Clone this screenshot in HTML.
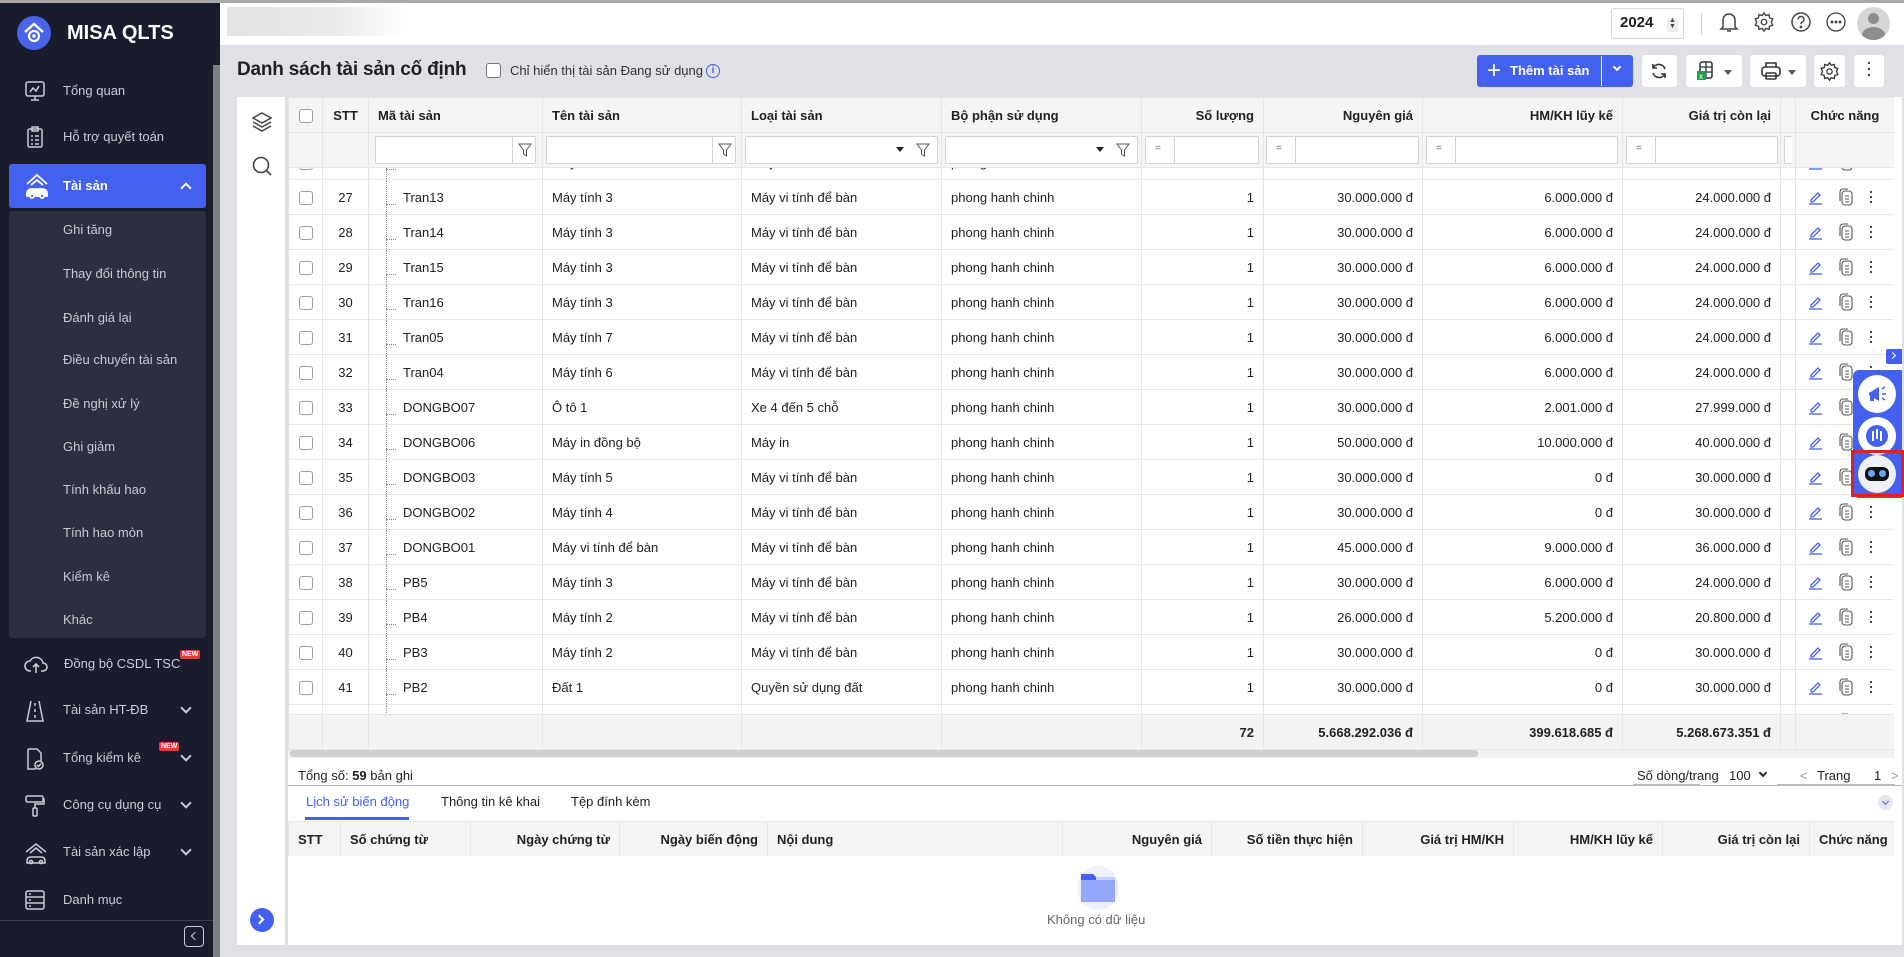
<!DOCTYPE html>
<html><head><meta charset="utf-8">
<style>
*{box-sizing:border-box;margin:0;padding:0}
body{width:1904px;height:957px;overflow:hidden;font-family:"Liberation Sans",Arial,sans-serif;font-size:13px;color:#212121;background:#dfe1e6;position:relative}
.abs{position:absolute}
#topborder{left:0;top:0;width:1904px;height:3px;background:#a9a9a9;z-index:9}
#side{left:0;top:0;width:220px;height:957px;background:#181c2d}
#side .sb{left:213px;top:65px;width:7px;height:892px;background:#7d7e83}
.mi{position:absolute;left:0;width:210px;height:40px;color:#c9ccd4;font-size:13px}
.mi span{position:absolute;left:63px;top:12px}
.mi svg{position:absolute;left:24px;top:9px}
.mi .chev{position:absolute;left:182px;top:14px;width:8px;height:8px;border-right:2px solid #c9ccd4;border-bottom:2px solid #c9ccd4;transform:rotate(45deg)}
.sub{position:absolute;left:63px;color:#c7cad2;font-size:13px}
.new{position:absolute;background:#e63b3b;color:#fff;font-size:7px;font-weight:bold;padding:1px 2px;border-radius:2px}
#hdr{left:220px;top:3px;width:1684px;height:42px;background:#fff}
.ibtn{position:absolute;background:#fff;border-radius:3px;height:32px;top:55px}
table{border-collapse:collapse;table-layout:fixed}
td,th{border:1px solid #e6e6e6;height:35px;padding:0 9px;white-space:nowrap;overflow:hidden}
th{font-weight:bold;text-align:left}
.r{text-align:right}.c{text-align:center}
.cb{display:inline-block;width:14px;height:14px;border:1px solid #9e9e9e;border-radius:3px;vertical-align:middle;background:#fff}
.tree{position:relative;padding-left:34px}
.tree:before{content:"";position:absolute;left:17px;top:0;height:100%;border-left:1px dotted #888}
.tree:after{content:"";position:absolute;left:17px;top:24px;width:10px;border-top:1px dotted #888}
.fi{position:absolute;top:136px;height:28px;background:#fff;border:1px solid #cfd2d6;border-radius:2px}
.act svg{vertical-align:middle}
</style></head><body>
<div id="topborder" class="abs"></div>
<div id="side" class="abs">
  <div class="abs sb"></div>
  <div class="abs" style="left:17px;top:16px;width:34px;height:34px;border-radius:50%;background:#4a63e8"></div>
  <svg class="abs" style="left:23px;top:21px" width="22" height="24" viewBox="0 0 22 24"><path d="M2 11 L11 3 L20 11" fill="none" stroke="#fff" stroke-width="2.4"/><circle cx="11" cy="15" r="5" fill="none" stroke="#fff" stroke-width="2.2"/><circle cx="11" cy="15" r="1.8" fill="#fff"/></svg>
  <div class="abs" style="left:67px;top:22px;color:#fff;font-weight:bold;font-size:20px">MISA QLTS</div>

  <div class="mi" style="top:71px"><svg width="22" height="22" viewBox="0 0 22 22" fill="none" stroke="#c9ccd4" stroke-width="1.5"><rect x="2" y="2" width="18" height="14" rx="2"/><path d="M11 16v4M7 20h8M6 12l3-4 3 3 3-5"/></svg><span>Tổng quan</span></div>
  <div class="mi" style="top:117px"><svg width="22" height="22" viewBox="0 0 22 22" fill="none" stroke="#c9ccd4" stroke-width="1.5"><rect x="4" y="3" width="14" height="18" rx="1.5"/><rect x="8" y="1" width="6" height="4"/><path d="M7 10h2M11 10h4M7 14h2M11 14h4M7 18h2M11 18h4"/></svg><span>Hỗ trợ quyết toán</span></div>
  <div class="abs" style="left:9px;top:164px;width:197px;height:44px;background:#4361ee;border-radius:3px"></div>
  <svg class="abs" style="left:24px;top:172px" width="26" height="28" viewBox="0 0 26 28" fill="none" stroke="#fff" stroke-width="1.8"><path d="M3 12 L13 3 L23 12"/><path d="M7 13 L13 8 L19 13"/><path d="M3 22 q0-5 5-5 h10 q5 0 5 5 v2 H3z" fill="#fff"/><circle cx="8" cy="24" r="2" fill="#4361ee"/><circle cx="18" cy="24" r="2" fill="#4361ee"/></svg>
  <div class="abs" style="left:63px;top:178px;color:#fff;font-weight:bold;font-size:13px">Tài sản</div>
  <div class="abs" style="left:182px;top:184px;width:8px;height:8px;border-left:2px solid #fff;border-top:2px solid #fff;transform:rotate(45deg)"></div>
  <div class="abs" style="left:9px;top:211px;width:197px;height:427px;background:#2c2f40;border-radius:3px"></div>
  <div class="sub" style="top:222px">Ghi tăng</div>
  <div class="sub" style="top:266px">Thay đổi thông tin</div>
  <div class="sub" style="top:310px">Đánh giá lại</div>
  <div class="sub" style="top:352px">Điều chuyển tài sản</div>
  <div class="sub" style="top:396px">Đề nghị xử lý</div>
  <div class="sub" style="top:439px">Ghi giảm</div>
  <div class="sub" style="top:482px">Tính khấu hao</div>
  <div class="sub" style="top:525px">Tính hao mòn</div>
  <div class="sub" style="top:569px">Kiểm kê</div>
  <div class="sub" style="top:612px">Khác</div>

  <div class="mi" style="top:644px"><svg width="24" height="22" viewBox="0 0 24 22" fill="none" stroke="#c9ccd4" stroke-width="1.6"><path d="M7 18 H6 a5 5 0 0 1 0-10 a7 7 0 0 1 13 2 a4 4 0 0 1 0 8 h-2"/><path d="M12 20 V11 M9 14 l3-3 3 3"/></svg><span style="left:64px">Đồng bộ CSDL TSC</span><div class="new" style="left:180px;top:6px">NEW</div></div>
  <div class="mi" style="top:690px"><svg width="22" height="24" viewBox="0 0 22 24" fill="none" stroke="#c9ccd4" stroke-width="1.5"><path d="M7 2 L3 22 H19 L15 2 M11 4v3M11 10v3M11 16v3"/></svg><span>Tài sản HT-ĐB</span><div class="chev"></div></div>
  <div class="mi" style="top:738px"><svg width="22" height="24" viewBox="0 0 22 24" fill="none" stroke="#c9ccd4" stroke-width="1.5"><path d="M4 2h9l4 4v8M4 2v20h8"/><circle cx="15" cy="18" r="4"/><path d="M13 18l1.5 1.5 2.5-3"/></svg><span>Tổng kiểm kê</span><div class="new" style="left:159px;top:4px">NEW</div><div class="chev"></div></div>
  <div class="mi" style="top:785px"><svg width="22" height="24" viewBox="0 0 22 24" fill="none" stroke="#c9ccd4" stroke-width="1.5"><rect x="2" y="2" width="17" height="6" rx="1.5"/><path d="M19 5h1v5h-9v4"/><rect x="9" y="14" width="4" height="8" rx="1"/></svg><span>Công cụ dụng cụ</span><div class="chev"></div></div>
  <div class="mi" style="top:832px"><svg width="24" height="24" viewBox="0 0 24 24" fill="none" stroke="#c9ccd4" stroke-width="1.5"><path d="M2 11 L12 3 L22 11M6 12l6-5 6 5"/><path d="M3 20q0-4 4-4h10q4 0 4 4v2H3z"/><circle cx="7" cy="21" r="1.6"/><circle cx="17" cy="21" r="1.6"/></svg><span>Tài sản xác lập</span><div class="chev"></div></div>
  <div class="mi" style="top:880px"><svg width="22" height="22" viewBox="0 0 22 22" fill="none" stroke="#c9ccd4" stroke-width="1.5"><rect x="2" y="2" width="18" height="18" rx="2"/><path d="M2 8h18M2 14h18M5 5h2M5 11h2M5 17h2"/></svg><span>Danh mục</span></div>
  <div class="abs" style="left:0;top:920px;width:213px;height:1px;background:#3a3d4e"></div>
  <div class="abs" style="left:184px;top:926px;width:20px;height:21px;border:1.5px solid #c9ccd4;border-radius:4px"></div>
  <div class="abs" style="left:192px;top:933px;width:6px;height:6px;border-left:1.5px solid #c9ccd4;border-bottom:1.5px solid #c9ccd4;transform:rotate(45deg)"></div>
</div>

<div id="hdr" class="abs"></div>
<div class="abs" style="left:227px;top:7px;width:180px;height:29px;background:linear-gradient(90deg,#e3e3e3,#ebebeb 60%,#fff)"></div>
<div class="abs" style="left:1611px;top:8px;width:73px;height:31px;border:1px solid #d5d5d5;border-radius:3px;background:#fff"></div>
<div class="abs" style="left:1620px;top:14px;font-weight:bold;font-size:15px">2024</div>
<div class="abs" style="left:1667px;top:18px;width:11px;height:14px;background:#eee;font-size:7px;line-height:6px;text-align:center;color:#444">▲<br>▼</div>
<div class="abs" style="left:1701px;top:13px;width:1px;height:22px;background:#ccc"></div>
<svg class="abs" style="left:1718px;top:10px" width="22" height="24" viewBox="0 0 22 24" fill="none" stroke="#444" stroke-width="1.5"><path d="M5 17V10a6 6 0 0 1 12 0v7l2 2H3z"/><path d="M9 21h4"/></svg>
<svg class="abs" style="left:1753px;top:11px" width="22" height="22" viewBox="0 0 24 24" fill="none" stroke="#444" stroke-width="1.5"><circle cx="12" cy="12" r="3"/><path d="M12 2l2 3 3.5-1 .5 3.5 3.5 1-1.5 3.5 1.5 3.5-3.5 1-.5 3.5-3.5-1-2 3-2-3-3.5 1-.5-3.5-3.5-1 1.5-3.5L2.5 8.5l3.5-1 .5-3.5L10 5z"/></svg>
<svg class="abs" style="left:1790px;top:11px" width="22" height="22" viewBox="0 0 22 22" fill="none" stroke="#444" stroke-width="1.5"><circle cx="11" cy="11" r="9"/><path d="M8 8.5a3 3 0 1 1 4 2.8c-1 .4-1 1-1 2"/><circle cx="11" cy="16" r=".6" fill="#444"/></svg>
<svg class="abs" style="left:1825px;top:11px" width="22" height="22" viewBox="0 0 22 22" fill="none" stroke="#444" stroke-width="1.3"><circle cx="11" cy="11" r="9"/><circle cx="7" cy="11" r=".8" fill="#444"/><circle cx="11" cy="11" r=".8" fill="#444"/><circle cx="15" cy="11" r=".8" fill="#444"/></svg>
<div class="abs" style="left:1857px;top:7px;width:33px;height:33px;border-radius:50%;background:#d6d6d6;overflow:hidden"><div class="abs" style="left:11px;top:6px;width:11px;height:11px;border-radius:50%;background:#8d8d8d"></div><div class="abs" style="left:5px;top:20px;width:23px;height:16px;border-radius:50%;background:#8d8d8d"></div></div>

<div class="abs" style="left:237px;top:59px;font-size:19px;font-weight:bold;letter-spacing:-0.2px">Danh sách tài sản cố định</div>
<div class="abs" style="left:486px;top:63px;width:15px;height:15px;border:1px solid #777;border-radius:3px;background:#fff"></div>
<div class="abs" style="left:510px;top:63px;font-size:13px;color:#333">Chỉ hiển thị tài sản Đang sử dụng</div>
<div class="abs" style="left:706px;top:64px;width:14px;height:14px;border:1.3px solid #4361ee;border-radius:50%;color:#4361ee;font-size:10px;text-align:center;line-height:12px;font-weight:bold">i</div>

<div class="ibtn" style="left:1477px;width:156px;background:#4361ee"></div>
<div class="abs" style="left:1487px;top:60px;color:#fff;font-size:24px;line-height:22px">+</div>
<div class="abs" style="left:1510px;top:63px;color:#fff;font-weight:bold;font-size:13px">Thêm tài sản</div>
<div class="abs" style="left:1601px;top:56px;width:1px;height:30px;background:#fff"></div>
<div class="abs" style="left:1614px;top:64px;width:6px;height:6px;border-right:2px solid #fff;border-bottom:2px solid #fff;transform:rotate(45deg)"></div>
<div class="ibtn" style="left:1642px;width:35px"></div>
<svg class="abs" style="left:1649px;top:61px" width="20" height="20" viewBox="0 0 20 20" fill="none" stroke="#333" stroke-width="1.6"><path d="M16 8a6.5 6.5 0 0 0-12-1M4 12a6.5 6.5 0 0 0 12 1"/><path d="M4 3v4h4M16 17v-4h-4"/></svg>
<div class="ibtn" style="left:1686px;width:56px"></div>
<svg class="abs" style="left:1697px;top:60px" width="18" height="22" viewBox="0 0 18 22"><rect x="3" y="2" width="12" height="16" rx="2" fill="none" stroke="#333" stroke-width="1.5"/><path d="M3 7h12M3 12h12M9 2v16" stroke="#333" stroke-width="1.3"/><rect x="0" y="11" width="9" height="9" fill="#1fa34a"/><text x="2" y="19" font-size="8" fill="#fff" font-family="Liberation Sans">x</text></svg>
<div class="abs" style="left:1724px;top:70px;border:4px solid transparent;border-top:5px solid #555"></div>
<div class="ibtn" style="left:1750px;width:56px"></div>
<svg class="abs" style="left:1760px;top:61px" width="22" height="20" viewBox="0 0 22 20" fill="none" stroke="#333" stroke-width="1.6"><path d="M6 6V2h10v4"/><rect x="2" y="6" width="18" height="9" rx="3"/><rect x="6" y="12" width="10" height="6" rx="1"/></svg>
<div class="abs" style="left:1788px;top:70px;border:4px solid transparent;border-top:5px solid #555"></div>
<div class="ibtn" style="left:1814px;width:31px"></div>
<svg class="abs" style="left:1819px;top:61px" width="21" height="21" viewBox="0 0 24 24" fill="none" stroke="#333" stroke-width="1.5"><circle cx="12" cy="12" r="3"/><path d="M12 2l2 3 3.5-1 .5 3.5 3.5 1-1.5 3.5 1.5 3.5-3.5 1-.5 3.5-3.5-1-2 3-2-3-3.5 1-.5-3.5-3.5-1 1.5-3.5L2.5 8.5l3.5-1 .5-3.5L10 5z"/></svg>
<div class="ibtn" style="left:1854px;width:30px"></div>
<div class="abs" style="left:1868px;top:62px;width:2px;height:2px;background:#444;box-shadow:0 6px #444,0 12px #444"></div>

<div class="abs" style="left:237px;top:97px;width:49px;height:848px;background:#fff;border-right:1px solid #ddd"></div>
<svg class="abs" style="left:251px;top:111px" width="22" height="22" viewBox="0 0 22 22" fill="none" stroke="#444" stroke-width="1.5"><path d="M11 2L2 7l9 5 9-5z"/><path d="M2 11l9 5 9-5M2 15l9 5 9-5"/></svg>
<svg class="abs" style="left:251px;top:155px" width="22" height="22" viewBox="0 0 22 22" fill="none" stroke="#444" stroke-width="1.6"><circle cx="10" cy="10" r="7.5"/><path d="M15.5 15.5L20 20"/></svg>
<div class="abs" style="left:250px;top:908px;width:24px;height:24px;border-radius:50%;background:#4361ee"></div>
<div class="abs" style="left:256px;top:916px;width:7px;height:7px;border-right:2px solid #fff;border-top:2px solid #fff;transform:rotate(45deg)"></div>

<div class="abs" style="left:287px;top:97px;width:1615px;height:848px;background:#fff;border-left:1px solid #ddd"></div>

<div class="abs" style="left:288px;top:97px;width:1606px;height:71px;background:#f5f5f5;overflow:hidden;z-index:3">
<table style="width:1606px;background:#fff">
<colgroup><col style="width:34px"><col style="width:46px"><col style="width:174px"><col style="width:199px"><col style="width:200px"><col style="width:200px"><col style="width:122px"><col style="width:159px"><col style="width:200px"><col style="width:158px"><col style="width:15px"><col style="width:99px"></colgroup>
<tr style="background:#f5f5f5"><th class="c" style="padding:0"><span class="cb"></span></th><th class="c" style="padding:0">STT</th><th>Mã tài sản</th><th>Tên tài sản</th><th>Loại tài sản</th><th>Bộ phận sử dụng</th><th class="r">Số lượng</th><th class="r">Nguyên giá</th><th class="r">HM/KH lũy kế</th><th class="r">Giá trị còn lại</th><th></th><th class="c">Chức năng</th></tr>
<tr style="background:#f5f5f5"><td></td><td></td><td></td><td></td><td></td><td></td><td></td><td></td><td></td><td></td><td></td><td></td></tr>
</table>
</div>
<div style="z-index:4;position:absolute;left:0;top:0">
<div class="fi" style="left:375px;width:161px"><div class="abs" style="left:136px;top:0;width:1px;height:26px;background:#cfd2d6"></div><svg class="abs" style="left:142px;top:6px" width="14" height="14" viewBox="0 0 14 14" fill="none" stroke="#555"><path d="M1 1h12L8.5 7v6l-3-2V7z"/></svg></div>
<div class="fi" style="left:546px;width:190px"><div class="abs" style="left:165px;top:0;width:1px;height:26px;background:#cfd2d6"></div><svg class="abs" style="left:171px;top:6px" width="14" height="14" viewBox="0 0 14 14" fill="none" stroke="#555"><path d="M1 1h12L8.5 7v6l-3-2V7z"/></svg></div>
<div class="fi" style="left:745px;width:193px"><div class="abs" style="left:150px;top:10px;border:4px solid transparent;border-top:5px solid #222"></div><svg class="abs" style="left:170px;top:6px" width="14" height="14" viewBox="0 0 14 14" fill="none" stroke="#555"><path d="M1 1h12L8.5 7v6l-3-2V7z"/></svg></div>
<div class="fi" style="left:945px;width:193px"><div class="abs" style="left:150px;top:10px;border:4px solid transparent;border-top:5px solid #222"></div><svg class="abs" style="left:170px;top:6px" width="14" height="14" viewBox="0 0 14 14" fill="none" stroke="#555"><path d="M1 1h12L8.5 7v6l-3-2V7z"/></svg></div>
<div class="fi" style="left:1145px;width:114px"><span class="abs" style="left:9px;top:6px;font-size:10px;color:#777">=</span><div class="abs" style="left:28px;top:0;width:1px;height:26px;background:#cfd2d6"></div></div>
<div class="fi" style="left:1266px;width:153px"><span class="abs" style="left:9px;top:6px;font-size:10px;color:#777">=</span><div class="abs" style="left:28px;top:0;width:1px;height:26px;background:#cfd2d6"></div></div>
<div class="fi" style="left:1426px;width:192px"><span class="abs" style="left:9px;top:6px;font-size:10px;color:#777">=</span><div class="abs" style="left:28px;top:0;width:1px;height:26px;background:#cfd2d6"></div></div>
<div class="fi" style="left:1626px;width:152px"><span class="abs" style="left:9px;top:6px;font-size:10px;color:#777">=</span><div class="abs" style="left:28px;top:0;width:1px;height:26px;background:#cfd2d6"></div></div>
<div class="fi" style="left:1784px;width:8px;border-right:none"></div>
</div>

<div class="abs" style="left:288px;top:168px;width:1606px;height:546px;overflow:hidden">
<table style="width:1606px;margin-top:-24px">
<colgroup><col style="width:34px"><col style="width:46px"><col style="width:174px"><col style="width:199px"><col style="width:200px"><col style="width:200px"><col style="width:122px"><col style="width:159px"><col style="width:200px"><col style="width:158px"><col style="width:15px"><col style="width:99px"></colgroup>
<tbody id="tb"></tbody>
</table>
</div>

<div class="abs" style="left:288px;top:714px;width:1606px;height:36px;background:#f3f3f3;overflow:hidden">
<table style="width:1606px;font-weight:bold">
<colgroup><col style="width:34px"><col style="width:46px"><col style="width:174px"><col style="width:199px"><col style="width:200px"><col style="width:200px"><col style="width:122px"><col style="width:159px"><col style="width:200px"><col style="width:158px"><col style="width:15px"><col style="width:99px"></colgroup>
<tr><td></td><td></td><td></td><td></td><td></td><td></td><td class="r">72</td><td class="r">5.668.292.036 đ</td><td class="r">399.618.685 đ</td><td class="r">5.268.673.351 đ</td><td></td><td></td></tr>
</table></div>
<div class="abs" style="left:288px;top:750px;width:1606px;height:8px;background:#f1f1f1"></div>
<div class="abs" style="left:290px;top:750px;width:1188px;height:7px;background:#cfcfcf;border-radius:4px"></div>

<div class="abs" style="left:298px;top:768px;font-size:13px">Tổng số: <b>59</b> bản ghi</div>
<div class="abs" style="left:1637px;top:768px;font-size:13px">Số dòng/trang</div>
<div class="abs" style="left:1633px;top:784px;width:67px;height:1px;background:#bbb"></div>
<div class="abs" style="left:1729px;top:768px;font-size:13px">100</div>
<div class="abs" style="left:1760px;top:770px;width:6px;height:6px;border-right:2px solid #222;border-bottom:2px solid #222;transform:rotate(45deg)"></div>
<div class="abs" style="left:1777px;top:784px;width:118px;height:1px;background:#bbb"></div>
<div class="abs" style="left:1800px;top:768px;color:#999">&lt;</div>
<div class="abs" style="left:1817px;top:768px">Trang</div>
<div class="abs" style="left:1874px;top:768px">1</div>
<div class="abs" style="left:1891px;top:768px;color:#999">&gt;</div>
<div class="abs" style="left:288px;top:785px;width:1614px;height:1px;background:#bbb"></div>

<div class="abs" style="left:306px;top:794px;color:#4361ee;font-size:13px">Lịch sử biến động</div>
<div class="abs" style="left:305px;top:817px;width:104px;height:3px;background:#4361ee"></div>
<div class="abs" style="left:441px;top:794px;font-size:13px">Thông tin kê khai</div>
<div class="abs" style="left:571px;top:794px;font-size:13px">Tệp đính kèm</div>
<div class="abs" style="left:1878px;top:795px;width:15px;height:15px;border-radius:50%;background:#e6e7ee"></div>
<div class="abs" style="left:1883px;top:799px;width:5px;height:5px;border-right:1.5px solid #4361ee;border-bottom:1.5px solid #4361ee;transform:rotate(45deg)"></div>

<div class="abs" style="left:288px;top:821px;width:1606px;height:35px;background:#f5f5f5;overflow:hidden">
<table style="width:1606px;font-weight:bold">
<colgroup><col style="width:52px"><col style="width:130px"><col style="width:149px"><col style="width:148px"><col style="width:295px"><col style="width:149px"><col style="width:151px"><col style="width:151px"><col style="width:149px"><col style="width:147px"><col style="width:85px"></colgroup>
<tr style="background:#f5f5f5"><td>STT</td><td>Số chứng từ</td><td class="r">Ngày chứng từ</td><td class="r">Ngày biến động</td><td>Nội dung</td><td class="r">Nguyên giá</td><td class="r">Số tiền thực hiện</td><td class="r">Giá trị HM/KH</td><td class="r">HM/KH lũy kế</td><td class="r">Giá trị còn lại</td><td>Chức năng</td></tr>
</table></div>
<div class="abs" style="left:1077px;top:866px;width:42px;height:44px;border-radius:50%;background:#eef0fb"></div>
<svg class="abs" style="left:1078px;top:866px" width="40" height="42" viewBox="0 0 40 42"><path d="M3 8h12l3 3h19v6H3z" fill="#4361ee"/><path d="M3 14h34v22H3z" fill="#93a6f7"/><path d="M18 11h19v3H18z" fill="#c6d0fb"/></svg>
<div class="abs" style="left:1047px;top:912px;color:#666;font-size:13px">Không có dữ liệu</div>

<div class="abs" style="left:1886px;top:349px;width:16px;height:15px;background:#4361ee;border-radius:2px 0 0 2px"></div>
<div class="abs" style="left:1890px;top:353px;width:5px;height:5px;border-right:1.5px solid #fff;border-top:1.5px solid #fff;transform:rotate(45deg)"></div>
<div class="abs" style="left:1853px;top:370px;width:49px;height:128px;background:#4361ee;border-radius:6px 0 0 6px"></div>
<div class="abs" style="left:1858px;top:375px;width:38px;height:38px;border-radius:50%;background:#fff"></div>
<svg class="abs" style="left:1866px;top:383px" width="22" height="22" viewBox="0 0 22 22" fill="#4361ee"><path d="M3 10l10-6v14L3 12z"/><rect x="4" y="12" width="4" height="6"/><path d="M16 6l3-2M16 11h4M16 15l3 2" stroke="#4361ee" stroke-width="1.5"/></svg>
<div class="abs" style="left:1858px;top:417px;width:38px;height:38px;border-radius:50%;background:#fff"></div>
<div class="abs" style="left:1866px;top:425px;width:22px;height:22px;border-radius:50%;background:#4361ee"></div>
<div class="abs" style="left:1872px;top:431px;width:2px;height:10px;background:#fff;box-shadow:4px -2px 0 #fff,8px 0 0 #fff"></div>
<div class="abs" style="left:1851px;top:450px;width:53px;height:47px;border:3px solid #e02020"></div>
<div class="abs" style="left:1858px;top:455px;width:38px;height:38px;border-radius:50%;background:#eef0f8"></div>
<div class="abs" style="left:1865px;top:467px;width:24px;height:14px;border-radius:6px;background:#111"></div>
<div class="abs" style="left:1868px;top:470px;width:7px;height:7px;border-radius:50%;background:#6ea0ff;box-shadow:11px 0 0 #6ea0ff"></div>

<script>
var rows=[
[26,"Tran12","Máy tính 3","Máy vi tính để bàn","30.000.000 đ","6.000.000 đ","24.000.000 đ"],
[27,"Tran13","Máy tính 3","Máy vi tính để bàn","30.000.000 đ","6.000.000 đ","24.000.000 đ"],
[28,"Tran14","Máy tính 3","Máy vi tính để bàn","30.000.000 đ","6.000.000 đ","24.000.000 đ"],
[29,"Tran15","Máy tính 3","Máy vi tính để bàn","30.000.000 đ","6.000.000 đ","24.000.000 đ"],
[30,"Tran16","Máy tính 3","Máy vi tính để bàn","30.000.000 đ","6.000.000 đ","24.000.000 đ"],
[31,"Tran05","Máy tính 7","Máy vi tính để bàn","30.000.000 đ","6.000.000 đ","24.000.000 đ"],
[32,"Tran04","Máy tính 6","Máy vi tính để bàn","30.000.000 đ","6.000.000 đ","24.000.000 đ"],
[33,"DONGBO07","Ô tô 1","Xe 4 đến 5 chỗ","30.000.000 đ","2.001.000 đ","27.999.000 đ"],
[34,"DONGBO06","Máy in đồng bộ","Máy in","50.000.000 đ","10.000.000 đ","40.000.000 đ"],
[35,"DONGBO03","Máy tính 5","Máy vi tính để bàn","30.000.000 đ","0 đ","30.000.000 đ"],
[36,"DONGBO02","Máy tính 4","Máy vi tính để bàn","30.000.000 đ","0 đ","30.000.000 đ"],
[37,"DONGBO01","Máy vi tính để bàn","Máy vi tính để bàn","45.000.000 đ","9.000.000 đ","36.000.000 đ"],
[38,"PB5","Máy tính 3","Máy vi tính để bàn","30.000.000 đ","6.000.000 đ","24.000.000 đ"],
[39,"PB4","Máy tính 2","Máy vi tính để bàn","26.000.000 đ","5.200.000 đ","20.800.000 đ"],
[40,"PB3","Máy tính 2","Máy vi tính để bàn","30.000.000 đ","0 đ","30.000.000 đ"],
[41,"PB2","Đất 1","Quyền sử dụng đất","30.000.000 đ","0 đ","30.000.000 đ"],
[42,"PB1","Đất 2","Quyền sử dụng đất","30.000.000 đ","0 đ","30.000.000 đ"]];
var edit='<svg width="16" height="16" viewBox="0 0 16 16" fill="none" stroke="#4361ee" stroke-width="1.3"><path d="M3 11l7-7 2 2-7 7H3z"/><path d="M1 15h13"/></svg>';
var copy='<svg width="16" height="18" viewBox="0 0 16 18" fill="none" stroke="#555" stroke-width="1.1"><rect x="4" y="3" width="10" height="14" rx="3"/><path d="M2 13V4a3 3 0 0 1 3-3h5"/><path d="M7 8h4M7 11h4M7 14h4"/></svg>';
var dots='<span style="display:inline-block;width:2px;height:2px;background:#444;box-shadow:0 5px #444,0 10px #444;vertical-align:middle;margin-top:-10px"></span>';
var h='';
rows.forEach(function(r){
h+='<tr><td class="c" style="padding:0"><span class="cb"></span></td><td class="c" style="padding:0">'+r[0]+'</td><td class="tree">'+r[1]+'</td><td>'+r[2]+'</td><td>'+r[3]+'</td><td>phong hanh chinh</td><td class="r">1</td><td class="r">'+r[4]+'</td><td class="r">'+r[5]+'</td><td class="r">'+r[6]+'</td><td></td><td class="act" style="padding:0 0 0 12px">'+edit+'<span style="display:inline-block;width:14px"></span>'+copy+'<span style="display:inline-block;width:16px"></span>'+dots+'</td></tr>';
});
document.getElementById('tb').innerHTML=h;
</script>
</body></html>
